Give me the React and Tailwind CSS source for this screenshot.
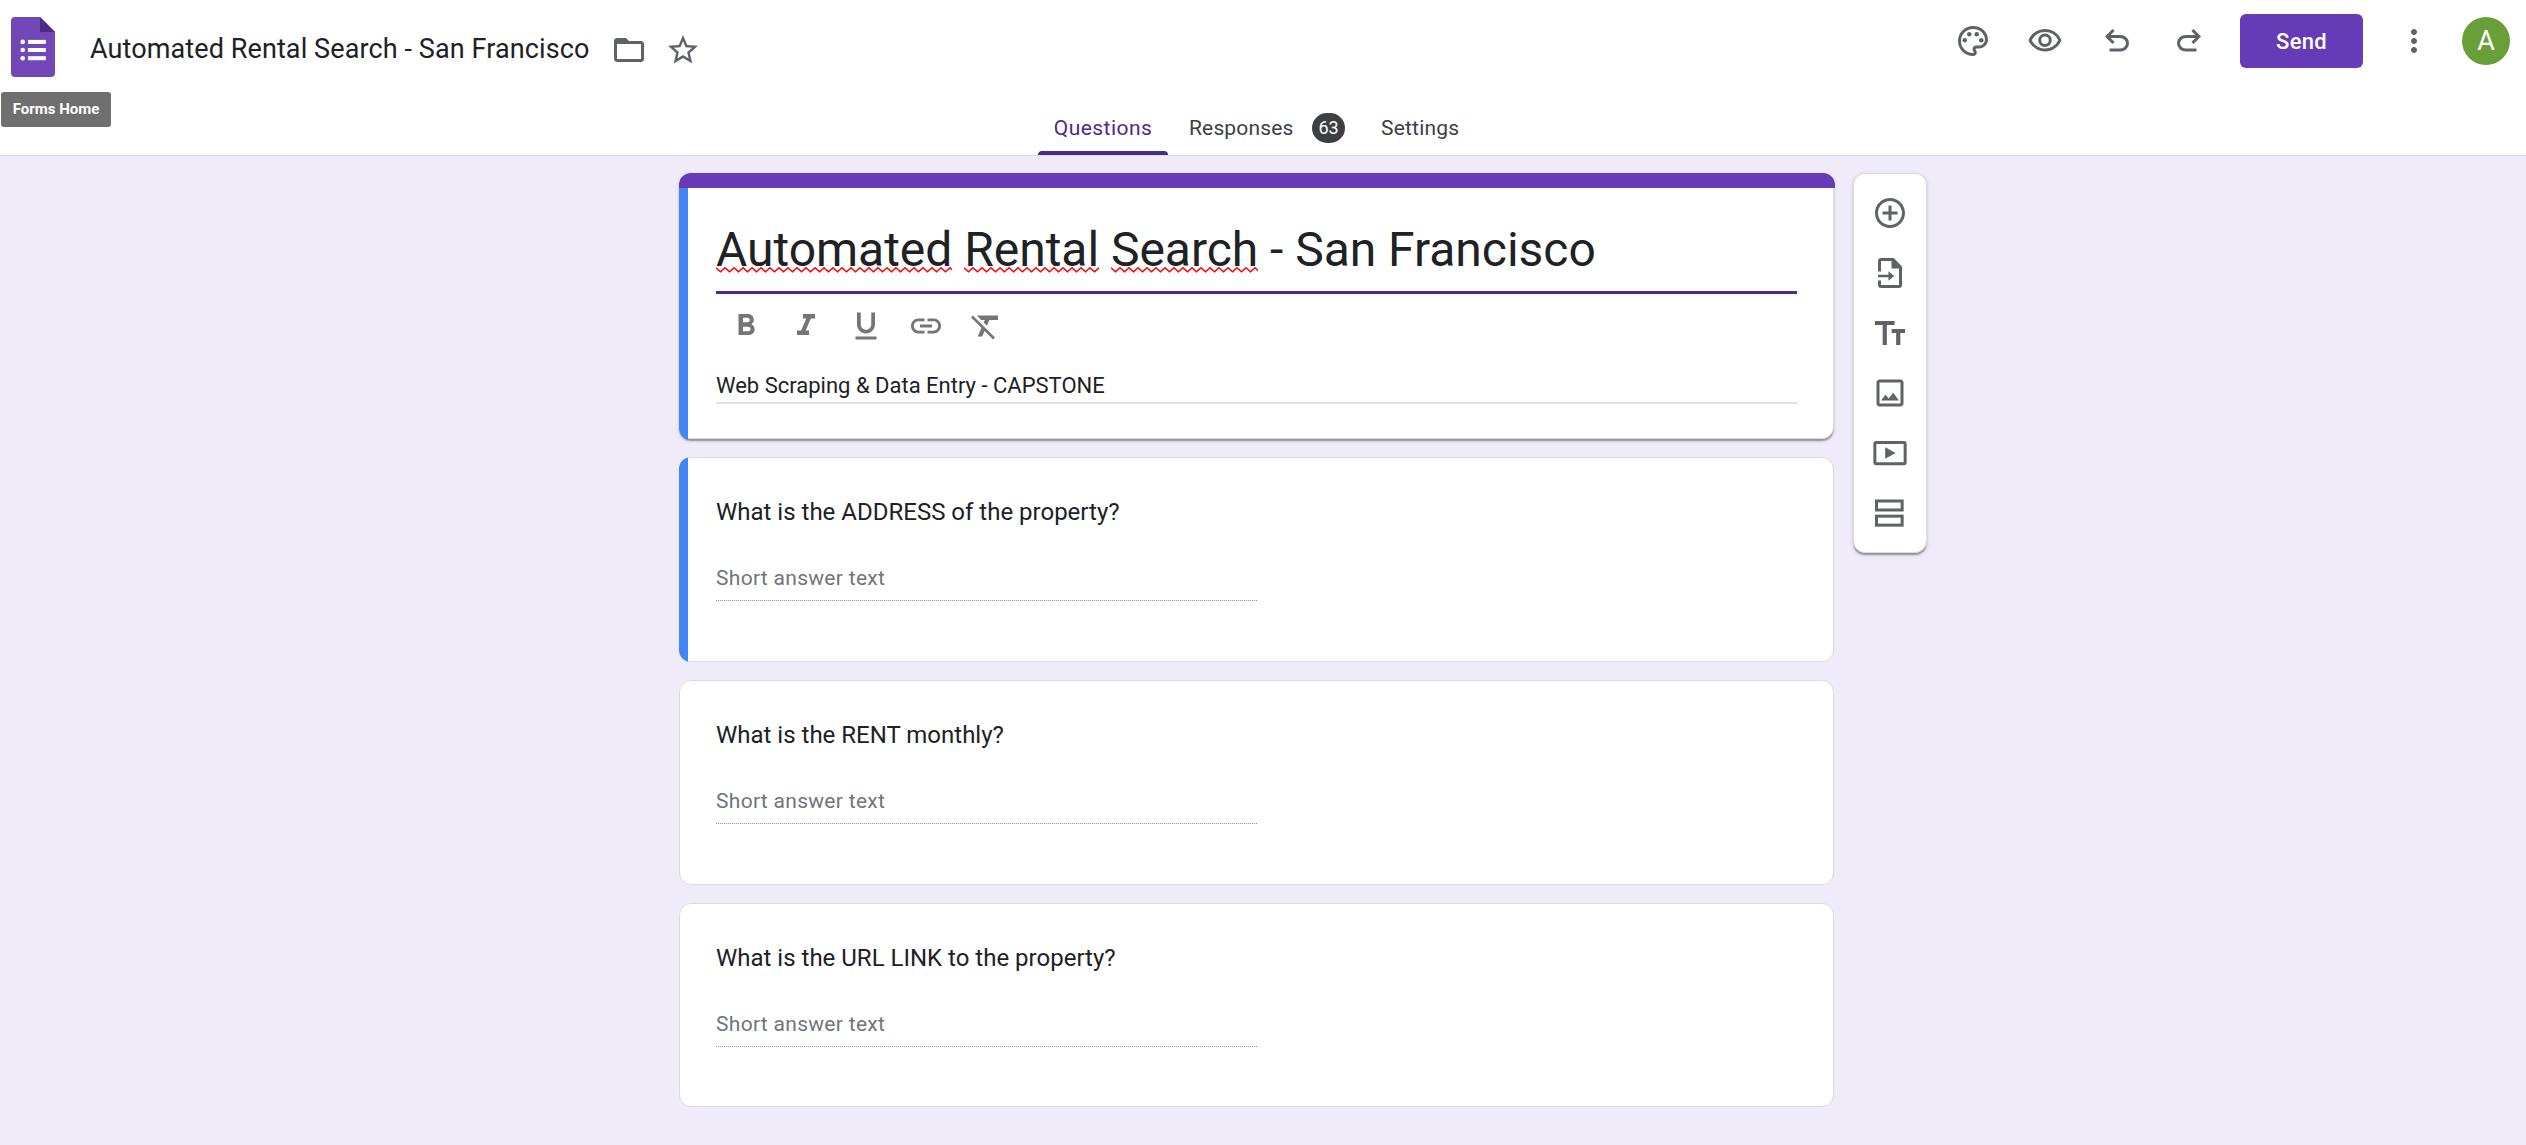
import React from "react";
import {
  MdOutlinePalette,
  MdOutlineVisibility,
  MdMoreVert,
  MdFolderOpen,
  MdStarBorder,
  MdFormatBold,
  MdFormatItalic,
  MdFormatUnderlined,
  MdLink,
  MdFormatClear,
  MdAddCircleOutline,
  MdOutlineImage,
} from "react-icons/md";

function FormsLogo() {
  return (
    <svg className="h-[60px] w-[44px] shrink-0" viewBox="0 0 44 60">
      <path
        d="M4 0H29L44 15V56a4 4 0 0 1-4 4H4a4 4 0 0 1-4-4V4a4 4 0 0 1 4-4Z"
        fill="#7248b9"
      />
      <path d="M29 0L44 15H29Z" fill="#4c2b87" />
      <g fill="#fff">
        <circle cx="11.7" cy="24.9" r="2.3" />
        <circle cx="11.7" cy="33" r="2.3" />
        <circle cx="11.7" cy="41.2" r="2.3" />
        <rect x="17" y="22.9" width="17.8" height="4" />
        <rect x="17" y="31" width="17.8" height="4" />
        <rect x="17" y="39.2" width="17.8" height="4" />
      </g>
    </svg>
  );
}

function UndoIcon({ className }) {
  return (
    <svg className={className} viewBox="0 0 24 24" fill="currentColor">
      <path d="M7 19v-2h7.1q1.575 0 2.738-1T18 13.5T16.838 11T14.1 10H7.8l2.6 2.6L9 14L4 9l5-5l1.4 1.4L7.8 8h6.3q2.425 0 4.163 1.575T20 13.5t-1.737 3.925T14.1 19z" />
    </svg>
  );
}

function ImportIcon({ className }) {
  return (
    <svg className={className} viewBox="0 0 24 24" fill="none">
      <path
        d="M5 11V4q0-1 1-1h8l5 5v12q0 1-1 1H6q-1 0-1-1v-3"
        stroke="currentColor"
        strokeWidth="2"
      />
      <path d="M13 3v6h6.2z" fill="currentColor" />
      <path d="M4 13.2h7v-2.3l3.8 3.1-3.8 3.1v-2.3H4z" fill="currentColor" />
    </svg>
  );
}

function TitleIcon({ className }) {
  return (
    <svg className={className} viewBox="0 0 24 24" fill="currentColor">
      <path d="M2 4h13v2.7H9.9V20H7.1V6.7H2zM13.1 9.3H22V12h-3.1v8h-2.8v-8h-3z" />
    </svg>
  );
}

function VideoIcon({ className }) {
  return (
    <svg className={className} viewBox="0 0 24 24" fill="none">
      <rect x="1.9" y="5" width="20.2" height="14.2" rx="0.8" stroke="currentColor" strokeWidth="2" />
      <path d="M8.8 8.2v7.6l7-3.8z" fill="currentColor" />
    </svg>
  );
}

function SectionIcon({ className }) {
  return (
    <svg className={className} viewBox="0 0 24 24" fill="none" stroke="currentColor" strokeWidth="2">
      <rect x="3" y="4" width="17.1" height="6" />
      <rect x="3" y="14.1" width="17.1" height="6" />
    </svg>
  );
}

function Misspelled({ children }) {
  const steps = Array.from({ length: 60 }, () => "l4.5 4l4.5 -4").join("");
  return (
    <span className="relative">
      {children}
      <svg className="absolute left-0 top-[46px] h-[6px] w-full" fill="none">
        <path d={"M0 0.8" + steps} stroke="#f00" strokeWidth="1.5" />
      </svg>
    </span>
  );
}

function Header() {
  return (
    <header className="flex h-[156px] flex-col justify-between border-b border-[#dadce0] bg-white">
      <div className="flex items-start justify-between">
        <div className="relative flex items-center pl-[11px] pt-[17px]">
          <FormsLogo />
          <h1 className="ml-[35px] mt-[4px] whitespace-nowrap text-[27px] leading-[36px] tracking-[0.1px] text-[#202124]">
            Automated Rental Search - San Francisco
          </h1>
          <MdFolderOpen className="ml-[22px] mt-[6px] size-9 shrink-0 text-[#5f6368]" />
          <MdStarBorder className="ml-[18px] mt-[6px] size-9 shrink-0 text-[#5f6368]" />
          <div className="absolute left-[1px] top-[92px] flex h-[35px] w-[110px] items-center justify-center rounded-[3px] bg-[#6f6f6f] text-[15px] font-bold text-white">
            Forms Home
          </div>
        </div>
        <div className="flex items-center pr-[16px] pt-[14px] text-[#5f6368]">
          <div className="flex gap-9">
            <MdOutlinePalette className="size-9" />
            <MdOutlineVisibility className="size-9" />
            <UndoIcon className="size-9" />
            <UndoIcon className="size-9 -scale-x-100" />
          </div>
          <button className="ml-[33px] h-[54px] w-[123px] rounded-[6px] bg-[#673ab7] text-[22px] font-medium tracking-[0.3px] text-white">
            Send
          </button>
          <MdMoreVert className="ml-[33px] size-9" />
          <div className="ml-[30px] flex size-12 items-center justify-center rounded-full bg-[#689f38] text-[27px] text-white">
            A
          </div>
        </div>
      </div>
      <nav className="flex h-[53px] items-stretch pl-[1038px] text-[21px] font-[450] leading-[30px] text-[#3c4043]">
        <div className="flex w-[130px] flex-col items-center justify-between text-[#4c2b87]">
          <span className="pt-[11px] tracking-[0.45px]">Questions</span>
          <span className="h-1 w-full rounded-t-[4px] bg-[#4c2b87]" />
        </div>
        <div className="ml-[21px] flex items-start">
          <span className="w-[123px] pt-[11px] tracking-[0.15px]">Responses</span>
          <span className="mt-[11px] flex h-[30px] w-[33px] items-center justify-center rounded-full bg-[#3c4043] text-[18px] text-white">
            63
          </span>
        </div>
        <span className="ml-[36px] pt-[11px] tracking-[0.2px]">Settings</span>
      </nav>
    </header>
  );
}

function TitleCard() {
  return (
    <section className="relative h-[266px] w-[1155px] rounded-[12px] border border-[#dadce0] bg-white px-[36px] pt-[44px] shadow-[0_3px_1.5px_-1.5px_rgba(0,0,0,0.2),0_1.5px_1.5px_rgba(0,0,0,0.14),0_1.5px_4.5px_rgba(0,0,0,0.12)]">
      <div className="absolute -left-px -right-[2px] -top-px h-[267px] overflow-hidden rounded-[12px]">
        <div className="h-[15px] bg-[#673ab7]" />
        <div className="h-[252px] w-[9px] bg-[#4285f4]" />
      </div>
      <div className="h-[76px] w-[1081px] border-b-[3px] border-[#4c2b87] text-[48px] leading-[63px] tracking-[-0.03px] text-[#202124]">
        <Misspelled>Automated</Misspelled> <Misspelled>Rental</Misspelled>{" "}
        <Misspelled>Search</Misspelled> - San Francisco
      </div>
      <div className="mt-[14px] flex gap-6 pl-[12px] text-[#757575]">
        <MdFormatBold className="size-9" />
        <MdFormatItalic className="size-9" />
        <MdFormatUnderlined className="size-9" />
        <MdLink className="size-9" />
        <MdFormatClear className="size-9" />
      </div>
      <div className="mt-[27px] h-[33px] w-[1081px] border-b-2 border-[#dfe0e3] text-[22px] leading-[30px] text-[#202124]">
        Web Scraping &amp; Data Entry - CAPSTONE
      </div>
    </section>
  );
}

function QuestionCard({ title, active }) {
  return (
    <section className="relative h-[205px] w-[1155px] rounded-[12px] border border-[#dadce0] bg-white px-[36px] pt-[36px] last:h-[204px]">
      {active && (
        <div className="absolute -inset-px overflow-hidden rounded-[12px]">
          <div className="h-full w-[9px] bg-[#4285f4]" />
        </div>
      )}
      <div className="text-[24px] leading-[36px] text-[#202124]">{title}</div>
      <div className="mt-[33px] h-[38px] w-[541px] border-b border-dotted border-[#8e9296] text-[21px] leading-[30px] tracking-[0.3px] text-[#70757a]">
        Short answer text
      </div>
    </section>
  );
}

function SideToolbar() {
  return (
    <aside className="ml-[19px] flex h-[380px] w-[74px] flex-col items-center gap-6 rounded-[12px] border border-[#dadce0] bg-white pt-[21px] text-[#5f6368] shadow-[0_3px_1.5px_-1.5px_rgba(0,0,0,0.2),0_1.5px_1.5px_rgba(0,0,0,0.14),0_1.5px_4.5px_rgba(0,0,0,0.12)]">
      <MdAddCircleOutline className="size-9" />
      <ImportIcon className="size-9" />
      <TitleIcon className="size-9" />
      <MdOutlineImage className="size-9" />
      <VideoIcon className="size-9" />
      <SectionIcon className="size-9" />
    </aside>
  );
}

export default function App() {
  return (
    <div className="flex h-[1145px] w-[2526px] flex-col overflow-hidden bg-[#f0ebf8] font-['Roboto',sans-serif]">
      <Header />
      <main className="flex items-start pl-[679px] pt-[17px]">
        <div className="flex flex-col gap-[18px]">
          <TitleCard />
          <QuestionCard title="What is the ADDRESS of the property?" active />
          <QuestionCard title="What is the RENT monthly?" />
          <QuestionCard title="What is the URL LINK to the property?" />
        </div>
        <SideToolbar />
      </main>
    </div>
  );
}
